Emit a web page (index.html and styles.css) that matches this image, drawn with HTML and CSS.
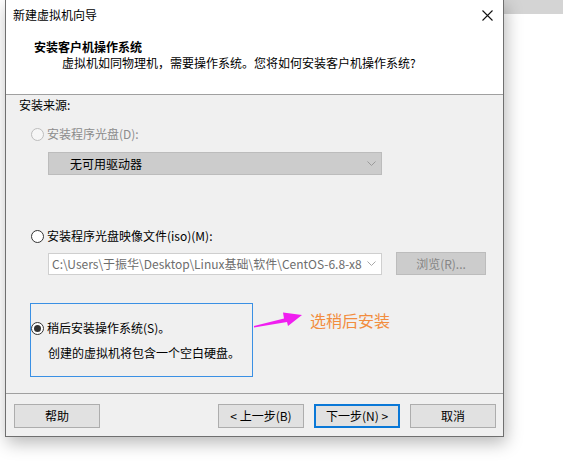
FILE: index.html
```html
<!DOCTYPE html>
<html lang="zh-CN">
<head>
  <meta charset="UTF-8">
  <title>新建虚拟机向导</title>
  <link rel="stylesheet" href="styles.css">
</head>
<body>
  <div class="screen">
    <div class="dialog">
      <div class="titlebar">
        <span>新建虚拟机向导</span>
        <svg class="close" width="11" height="11" viewBox="0 0 11 11">
          <path d="M0.5 0.5 L10.5 10.5 M10.5 0.5 L0.5 10.5" stroke="#111" stroke-width="1.1" fill="none"/>
        </svg>
      </div>
      <div class="header">
        <div class="header-title">安装客户机操作系统</div>
        <div class="header-sub">虚拟机如同物理机，需要操作系统。您将如何安装客户机操作系统?</div>
      </div>

      <div class="content">
        <div class="label">安装来源:</div>

        <div class="option disabled first">
          <span class="radio"></span>
          <span>安装程序光盘(D):</span>
        </div>
        <div class="select disabled-box">
          <span>无可用驱动器</span>
          <svg class="chevron" width="9" height="5" viewBox="0 0 9 5"><path d="M0.5 0.5 L4.5 4.5 L8.5 0.5" stroke="#9a9a9a" fill="none"/></svg>
        </div>

        <div class="option second">
          <span class="radio"></span>
          <span>安装程序光盘映像文件(iso)(M):</span>
        </div>
        <div class="path-row">
          <div class="path">
            <span class="path-text">C:\Users\于振华\Desktop\Linux基础\软件\CentOS-6.8-x8</span>
            <svg class="chevron" width="9" height="5" viewBox="0 0 9 5"><path d="M0.5 0.5 L4.5 4.5 L8.5 0.5" stroke="#a8a8a8" fill="none"/></svg>
          </div>
          <div class="browse">浏览(R)...</div>
        </div>

        <div class="later">
          <div class="option">
            <span class="radio checked"></span>
            <span>稍后安装操作系统(S)。</span>
          </div>
          <div class="later-note">创建的虚拟机将包含一个空白硬盘。</div>
        </div>

        <svg class="arrow" width="50" height="18" viewBox="0 0 50 18">
          <polygon points="0,15 30,7.5 29,1.5 48,4 34,15 33,11 0,16.5" fill="#f01ef0"/>
        </svg>
        <div class="note">选稍后安装</div>
      </div>

      <div class="footer">
        <div class="btn">帮助</div>
        <div class="spacer"></div>
        <div class="btn">&lt; 上一步(B)</div>
        <div class="btn primary">下一步(N) &gt;</div>
        <div class="btn">取消</div>
      </div>
    </div>
    <div class="outside">
      <div class="strip"></div>
    </div>
  </div>
</body>
</html>
```

FILE: styles.css
```css
html, body {
  margin: 0;
  padding: 0;
  background: #fff;
}
body {
  font-family: "Noto Sans CJK SC", "Noto Sans", sans-serif;
  font-size: 12px;
  color: #000;
  width: 563px;
  height: 466px;
  overflow: hidden;
}
.screen {
  display: flex;
  align-items: flex-start;
}
.dialog {
  margin-left: 5px;
  width: 497px;
  border: 1px solid #6f6f6f;
  border-top: none;
  background: #f0f0f0;
  box-shadow: 2px 6px 16px rgba(0, 0, 0, 0.28);
  position: relative;
  z-index: 1;
}
.outside {
  flex: 1;
}
.strip {
  height: 14px;
  background: #d4d4d4;
}

.titlebar {
  height: 30px;
  background: #fff;
  display: flex;
  align-items: center;
  justify-content: space-between;
  padding: 0 10px 0 7px;
  line-height: 16px;
}
.header {
  height: 55px;
  background: #fff;
  padding: 9px 0 0 28px;
  border-bottom: 1px solid #a0a0a0;
  line-height: 16px;
}
.header-title {
  font-weight: bold;
}
.header-sub {
  padding-left: 28px;
}

.content {
  position: relative;
  height: 296px;
  padding: 2px 0 0 13px;
  border-bottom: 1px solid #a0a0a0;
  line-height: 16px;
}
.option {
  display: flex;
  align-items: center;
  gap: 3px;
  height: 16px;
}
.option.first {
  margin: 13px 0 0 12px;
}
.option.second {
  margin: 53px 0 0 12px;
}
.disabled {
  color: #8c8c8c;
}
.radio {
  width: 11px;
  height: 11px;
  border: 1px solid #333;
  border-radius: 50%;
  background: #fff;
  position: relative;
  flex: none;
}
.disabled .radio {
  border-color: #bdbdbd;
  background: #f6f6f6;
}
.radio.checked::after {
  content: "";
  position: absolute;
  left: 2px;
  top: 2px;
  width: 7px;
  height: 7px;
  border-radius: 50%;
  background: #333;
}

.select {
  margin: 10px 0 0 29px;
  height: 21px;
  display: flex;
  align-items: center;
  justify-content: space-between;
  padding: 0 0 0 21px;
  box-sizing: content-box;
}
.disabled-box {
  background: #cccccc;
  border: 1px solid #bcbcbc;
  width: 311px;
}
.chevron {
  margin-right: 5px;
  flex: none;
}

.path-row {
  display: flex;
  align-items: center;
  gap: 14px;
  margin: 8px 0 0 29px;
}
.path {
  width: 329px;
  height: 20px;
  border: 1px solid #cfcfcf;
  background: #fff;
  display: flex;
  align-items: center;
  justify-content: space-between;
  padding-left: 3px;
  box-sizing: content-box;
}
.path-text {
  color: #6d6d6d;
  white-space: nowrap;
}
.browse {
  width: 88px;
  height: 21px;
  border: 1px solid #bcbcbc;
  background: #cccccc;
  color: #858585;
  text-align: center;
  line-height: 21px;
}

.later {
  margin: 28px 0 0 11px;
  width: 221px;
  height: 72px;
  border: 1px solid #3a90e4;
}
.later .option {
  margin: 16px 0 0 0;
}
.later-note {
  margin: 9px 0 0 17px;
}

.arrow {
  position: absolute;
  left: 248px;
  top: 216px;
}
.note {
  position: absolute;
  left: 304px;
  top: 215px;
  font-size: 16px;
  line-height: 20px;
  color: #f28d3e;
}

.footer {
  height: 42px;
  display: flex;
  align-items: flex-start;
  padding: 10px 7px 0 8px;
  box-sizing: border-box;
  gap: 10px;
}
.spacer {
  flex: 1;
}
.btn {
  width: 84px;
  height: 22px;
  border: 1px solid #adadad;
  background: #e1e1e1;
  text-align: center;
  line-height: 22px;
}
.btn.primary {
  border: 2px solid #0a78d7;
  width: 82px;
  height: 20px;
  line-height: 20px;
}
```
